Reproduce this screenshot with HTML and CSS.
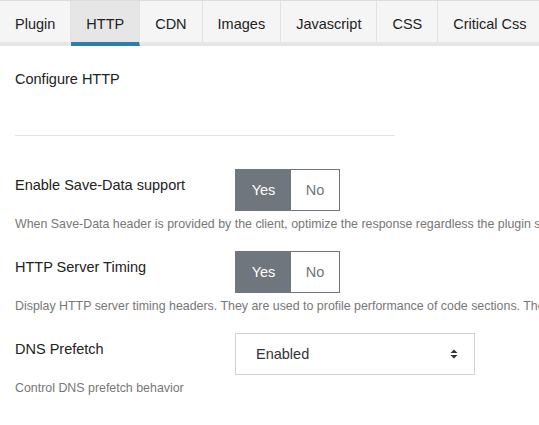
FILE: index.html
```html
<!DOCTYPE html>
<html>
<head>
<meta charset="utf-8">
<link rel="stylesheet" href="styles.css">
</head>
<body>
<nav class="tabs">
  <a class="tab">Plugin</a>
  <a class="tab active">HTTP</a>
  <a class="tab">CDN</a>
  <a class="tab">Images</a>
  <a class="tab">Javascript</a>
  <a class="tab">CSS</a>
  <a class="tab">Critical Css</a>
</nav>
<main class="content">
  <h2 class="title">Configure HTTP</h2>
  <hr class="sep">
  <div class="field">
    <div class="row">
      <label class="label">Enable Save-Data support</label>
      <div class="toggle"><span class="opt on">Yes</span><span class="opt">No</span></div>
    </div>
    <p class="desc">When Save-Data header is provided by the client, optimize the response regardless the plugin settings</p>
  </div>
  <div class="field">
    <div class="row">
      <label class="label">HTTP Server Timing</label>
      <div class="toggle"><span class="opt on">Yes</span><span class="opt">No</span></div>
    </div>
    <p class="desc">Display HTTP server timing headers. They are used to profile performance of code sections. These headers</p>
  </div>
  <div class="field">
    <div class="row">
      <label class="label">DNS Prefetch</label>
      <div class="select"><span>Enabled</span>
        <svg class="arrows" width="8" height="10" viewBox="0 0 8 10"><path d="M4 0.5 L7.5 4 L0.5 4 Z M4 9.5 L7.5 6 L0.5 6 Z" fill="#333"/></svg>
      </div>
    </div>
    <p class="desc">Control DNS prefetch behavior</p>
  </div>
</main>
</body>
</html>
```

FILE: styles.css
```css
html, body {
  margin: 0;
  padding: 0;
  background: #fff;
  font-family: "Liberation Sans", Arial, sans-serif;
  color: #222;
  overflow: hidden;
}
.tabs {
  display: flex;
  background: #f5f5f5;
  border-top: 1px solid #dcdcdc;
  border-bottom: 4px solid #e6e6e6;
  height: 41px;
  box-sizing: content-box;
}
.tab {
  display: flex;
  align-items: center;
  padding: 4px 15px 0;
  font-size: 14.5px;
  color: #222;
  border-right: 1px solid #e2e2e2;
  height: 41px;
  box-sizing: border-box;
  white-space: nowrap;
  flex: none;
}
.tab:last-child { border-right: none; }
.tab.active {
  background: #e6e6e6;
  height: 45px;
  border-bottom: 4px solid #2e7ea7;
  margin-bottom: -4px;
}
.content {
  padding: 0 15px;
}
.title {
  margin: 23px 0 0;
  font-size: 14.5px;
  font-weight: normal;
  line-height: 20px;
}
.sep {
  width: 380px;
  margin: 46px 0 33px;
  border: none;
  border-top: 1px solid #e5e5e5;
  height: 0;
}
.field {
  margin-bottom: 18px;
}
.row {
  display: flex;
  align-items: flex-start;
}
.label {
  width: 220px;
  flex: none;
  font-size: 14.5px;
  line-height: 20px;
  padding-top: 6px;
}
.toggle {
  display: flex;
  height: 42px;
  box-sizing: border-box;
  border: 1px solid #6f767d;
}
.opt {
  display: flex;
  align-items: center;
  justify-content: center;
  font-size: 14.5px;
  color: #6f767d;
  background: #fff;
  width: 48px;
}
.opt.on {
  width: 55px;
  background: #6f767d;
  color: #fff;
}
.select {
  width: 240px;
  height: 42px;
  box-sizing: border-box;
  border: 1px solid #d2d2d2;
  display: flex;
  align-items: center;
  justify-content: space-between;
  padding: 0 16px 0 20px;
  font-size: 14.5px;
  color: #333;
}
.arrows { display: block; }
.desc {
  margin: 5px 0 0;
  font-size: 12.4px;
  line-height: 17px;
  color: #777;
  white-space: nowrap;
}
```
